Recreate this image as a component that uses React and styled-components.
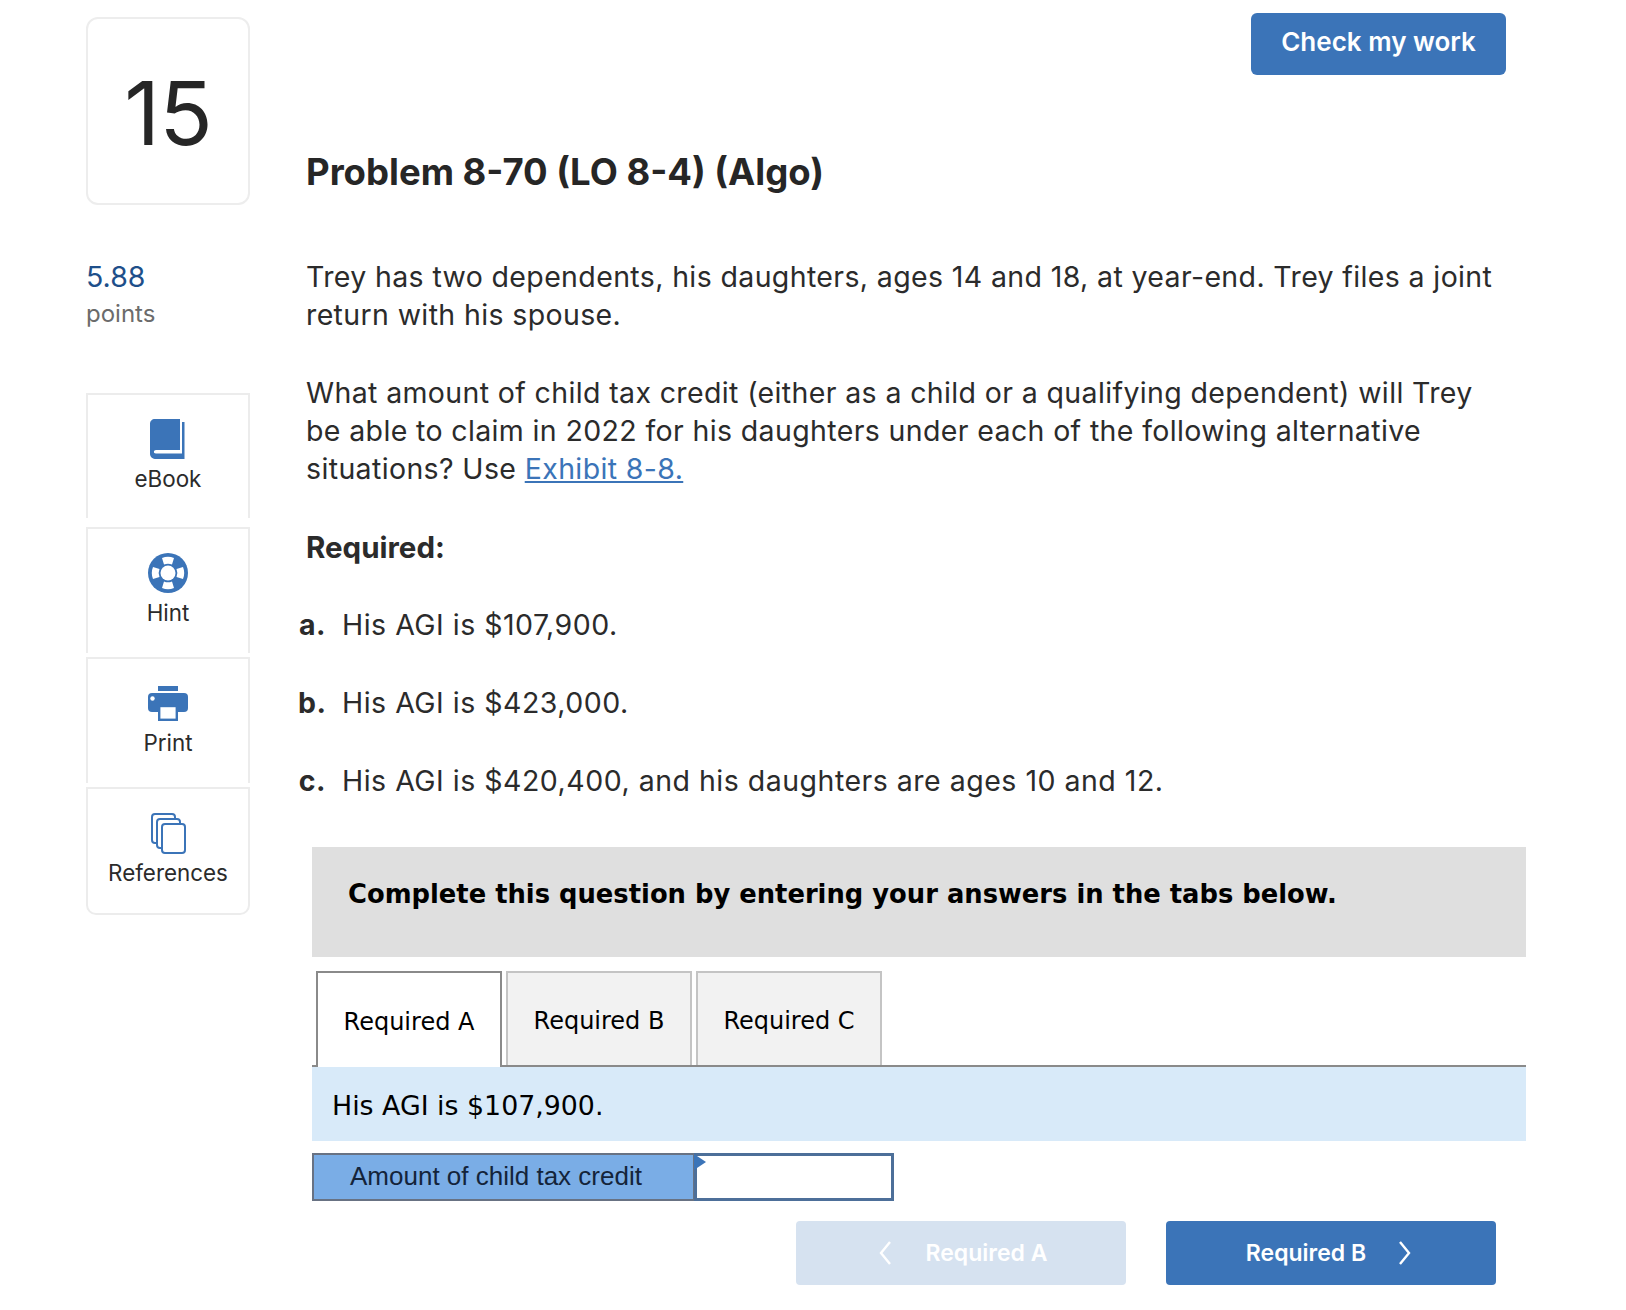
import React from "react";
import styled, { createGlobalStyle } from "styled-components";

const Global = createGlobalStyle`
  html, body { margin: 0; padding: 0; background: #fff; }
  * { box-sizing: border-box; }
`;

const blue = "#3b74b8";
const sans = `Inter, "Liberation Sans", sans-serif`;

const Page = styled.div`
  width: 1626px;
  height: 1310px;
  display: flex;
  padding-left: 86px;
  font-family: ${sans};
  color: #2b2b2b;
  overflow: hidden;
`;
const Sidebar = styled.aside`
  width: 164px;
  flex: none;
  padding-top: 17px;
`;
const NumberCard = styled.div`
  height: 188px;
  border: 2px solid #ededed;
  border-radius: 12px;
  display: flex;
  align-items: center;
  justify-content: center;
  font-size: 88px;
  letter-spacing: -1px;
  color: #262626;
  padding-top: 3px;
`;
const Points = styled.div`
  margin-top: 53px;
  height: 78px;
`;
const PointValue = styled.div`
  font-size: 28.5px;
  line-height: 38px;
  color: #1e4f8a;
`;
const PointLabel = styled.div`
  font-size: 24px;
  line-height: 35px;
  color: #6b6b6b;
`;
const Tools = styled.div`
  margin-top: 57px;
  display: flex;
  flex-direction: column;
`;
const Tool = styled.div`
  height: ${(p) => p.$h}px;
  margin-bottom: ${(p) => p.$gap}px;
  border: 2.5px solid #ececec;
  border-bottom: ${(p) => (p.$last ? "2.5px solid #ececec" : "none")};
  border-radius: ${(p) => (p.$last ? "0 0 10px 10px" : "0")};
  display: flex;
  flex-direction: column;
  align-items: center;
  padding-top: 23px;
  font-size: 22.4px;
  color: #2b2b2b;
`;
const ToolIcon = styled.div`
  height: 42px;
  display: flex;
  align-items: center;
  justify-content: center;
  margin-bottom: 5px;
`;

const Main = styled.main`
  width: 1232px;
  margin-left: 56px;
  display: flex;
  flex-direction: column;
  padding-top: 13px;
`;
const TopBar = styled.div`
  display: flex;
  justify-content: flex-end;
  padding-right: 32px;
`;
const CheckButton = styled.button`
  width: 255px;
  height: 62px;
  padding: 0 0 6px;
  background: ${blue};
  border: none;
  border-radius: 6px;
  color: #fff;
  font-family: ${sans};
  font-weight: 600;
  font-size: 26px;
`;
const Title = styled.h1`
  margin: 74px 0 0;
  font-size: 36.5px;
  line-height: 46px;
  font-weight: 700;
  color: #262626;
`;
const Para = styled.p`
  margin: ${(p) => p.$top}px 0 0;
  width: 1195px;
  font-size: 28.5px;
  letter-spacing: 0.37px;
  line-height: 38px;
  color: #2b2b2b;
`;
const ExLink = styled.a`
  color: ${blue};
  text-decoration: underline;
`;
const RequiredHead = styled.div`
  margin-top: 40px;
  font-size: 29.5px;
  line-height: 38px;
  font-weight: 700;
`;
const List = styled.div`
  margin: 40px 0 0 -8px;
  display: flex;
  flex-direction: column;
  gap: 40px;
`;
const Item = styled.div`
  display: flex;
  font-size: 28.5px;
  letter-spacing: 0.5px;
  line-height: 38px;
`;
const Letter = styled.b`
  width: 28px;
  text-align: right;
  margin-right: 16px;
`;
const Work = styled.section`
  margin: 47px 0 0 6px;
  width: 1214px;
`;
const Banner = styled.div`
  height: 110px;
  background: #dfdfdf;
  padding: 32px 36px 0;
  font-family: "DejaVu Sans", Verdana, sans-serif;
  font-weight: 700;
  font-size: 25.8px;
  line-height: 30px;
  color: #000;
`;
const TabBar = styled.div`
  margin-top: 14px;
  height: 96px;
  display: flex;
  gap: 4px;
  padding-left: 4px;
  border-bottom: 2px solid #8a8a8a;
`;
const Tab = styled.div`
  width: 186px;
  height: ${(p) => (p.$active ? 96 : 94)}px;
  padding-top: 4px;
  background: ${(p) => (p.$active ? "#fff" : "#f2f2f2")};
  border: 2px solid ${(p) => (p.$active ? "#8a8a8a" : "#c4c4c4")};
  border-bottom: none;
  display: flex;
  align-items: center;
  justify-content: center;
  font-family: "DejaVu Sans", Tahoma, sans-serif;
  font-size: 24px;
  color: #000;
`;
const Situation = styled.div`
  height: 74px;
  padding: 2px 0 0 20px;
  background: #d8eaf9;
  display: flex;
  align-items: center;
  font-family: "DejaVu Sans", Tahoma, sans-serif;
  font-size: 26.8px;
  color: #000;
`;
const AnswerRow = styled.div`
  margin-top: 12px;
  display: flex;
  width: 582px;
  height: 48px;
`;
const AnswerLabel = styled.div`
  width: 382px;
  background: #7aade6;
  border: 2px solid #687283;
  border-right: 1px solid #687283;
  display: flex;
  align-items: center;
  padding: 0 0 2px 36px;
  font-family: "Liberation Sans", Arial, sans-serif;
  font-size: 26px;
  color: #14243a;
`;
const AnswerInput = styled.div`
  flex: 1;
  position: relative;
  background: #fff;
  border: 3px solid #4d6f99;
  &::before {
    content: "";
    position: absolute;
    left: -3px;
    top: -2px;
    border-left: 12px solid ${blue};
    border-top: 8px solid transparent;
    border-bottom: 8px solid transparent;
  }
`;
const NavRow = styled.div`
  margin-top: 20px;
  display: flex;
  gap: 40px;
  padding-left: 484px;
`;
const NavButton = styled.div`
  width: 330px;
  height: 64px;
  padding: ${(p) => (p.$off ? "0 0 0 3px" : "0 4px 0 0")};
  border-radius: 4px;
  background: ${(p) => (p.$off ? "#d6e2f0" : blue)};
  color: #fff;
  display: flex;
  align-items: center;
  justify-content: center;
  gap: ${(p) => (p.$off ? 34 : 32)}px;
  font-size: 23px;
  font-weight: 600;
`;

const Book = () => (
  <svg width="36" height="40" viewBox="0 0 36 40">
    <path d="M5 0h25v31H6c-2.500 0-3 3.500 0 3.500h26V3h2.500v37H6c-3 0-6-2-6-5V5c0-3 2-5 5-5z" fill={blue} />
  </svg>
);
const Pad = ({ angle }) => (
  <path d="M15 6a16 16 0 0 1 12 0l-2 6.500a10 10 0 0 0-8 0z" transform={`rotate(${angle} 21 21)`} />
);
const Buoy = () => (
  <svg width="42" height="42" viewBox="0 0 42 42">
    <circle cx="21" cy="21" r="20" fill={blue} />
    <circle cx="21" cy="21" r="7.500" fill="#fff" />
    <g fill="#fff">
      <Pad angle={0} />
      <Pad angle={90} />
      <Pad angle={180} />
      <Pad angle={270} />
    </g>
  </svg>
);
const Printer = () => (
  <svg width="40" height="35" viewBox="0 0 40 35">
    <rect x="10" y="0" width="20" height="5" fill={blue} />
    <rect x="0" y="7" width="40" height="19" rx="4" fill={blue} />
    <circle cx="4.500" cy="12.500" r="2.200" fill="#fff" />
    <rect x="11.200" y="20" width="17.600" height="13.800" fill="#fff" stroke={blue} strokeWidth="2.400" />
  </svg>
);
const Pages = () => (
  <svg width="35" height="41" viewBox="0 0 35 41" fill="#fff" stroke={blue} strokeWidth="2">
    <rect x="1" y="1" width="23" height="29" rx="3" />
    <rect x="6" y="6" width="23" height="29" rx="3" />
    <rect x="11" y="11" width="23" height="29" rx="3" />
  </svg>
);
const Chevron = ({ left }) => (
  <svg width="14" height="26" viewBox="0 0 14 26" fill="none" stroke="#fff" strokeWidth="2.400">
    <path d={left ? "M12 2L3 13l9 11" : "M2 2l9 11-9 11"} />
  </svg>
);

export default function App() {
  return (
    <Page>
      <Global />
      <Sidebar>
        <NumberCard>15</NumberCard>
        <Points>
          <PointValue>5.88</PointValue>
          <PointLabel>points</PointLabel>
        </Points>
        <Tools>
          <Tool $h={125} $gap={9}><ToolIcon><Book /></ToolIcon>eBook</Tool>
          <Tool $h={126} $gap={4}><ToolIcon><Buoy /></ToolIcon>Hint</Tool>
          <Tool $h={126} $gap={4}><ToolIcon><Printer /></ToolIcon>Print</Tool>
          <Tool $h={128} $gap={0} $last><ToolIcon><Pages /></ToolIcon>References</Tool>
        </Tools>
      </Sidebar>
      <Main>
        <TopBar><CheckButton>Check my work</CheckButton></TopBar>
        <Title>Problem 8-70 (LO 8-4) (Algo)</Title>
        <Para $top={63}>Trey has two dependents, his daughters, ages 14 and 18, at year-end. Trey files a joint return with his spouse.</Para>
        <Para $top={40}>What amount of child tax credit (either as a child or a qualifying dependent) will Trey be able to claim in 2022 for his daughters under each of the following alternative situations? Use <ExLink>Exhibit 8-8.</ExLink></Para>
        <RequiredHead>Required:</RequiredHead>
        <List>
          <Item><Letter>a.</Letter>His AGI is $107,900.</Item>
          <Item><Letter>b.</Letter>His AGI is $423,000.</Item>
          <Item><Letter>c.</Letter>His AGI is $420,400, and his daughters are ages 10 and 12.</Item>
        </List>
        <Work>
          <Banner>Complete this question by entering your answers in the tabs below.</Banner>
          <TabBar>
            <Tab $active>Required A</Tab>
            <Tab>Required B</Tab>
            <Tab>Required C</Tab>
          </TabBar>
          <Situation>His AGI is $107,900.</Situation>
          <AnswerRow>
            <AnswerLabel>Amount of child tax credit</AnswerLabel>
            <AnswerInput />
          </AnswerRow>
          <NavRow>
            <NavButton $off><Chevron left />Required A</NavButton>
            <NavButton>Required B<Chevron /></NavButton>
          </NavRow>
        </Work>
      </Main>
    </Page>
  );
}
